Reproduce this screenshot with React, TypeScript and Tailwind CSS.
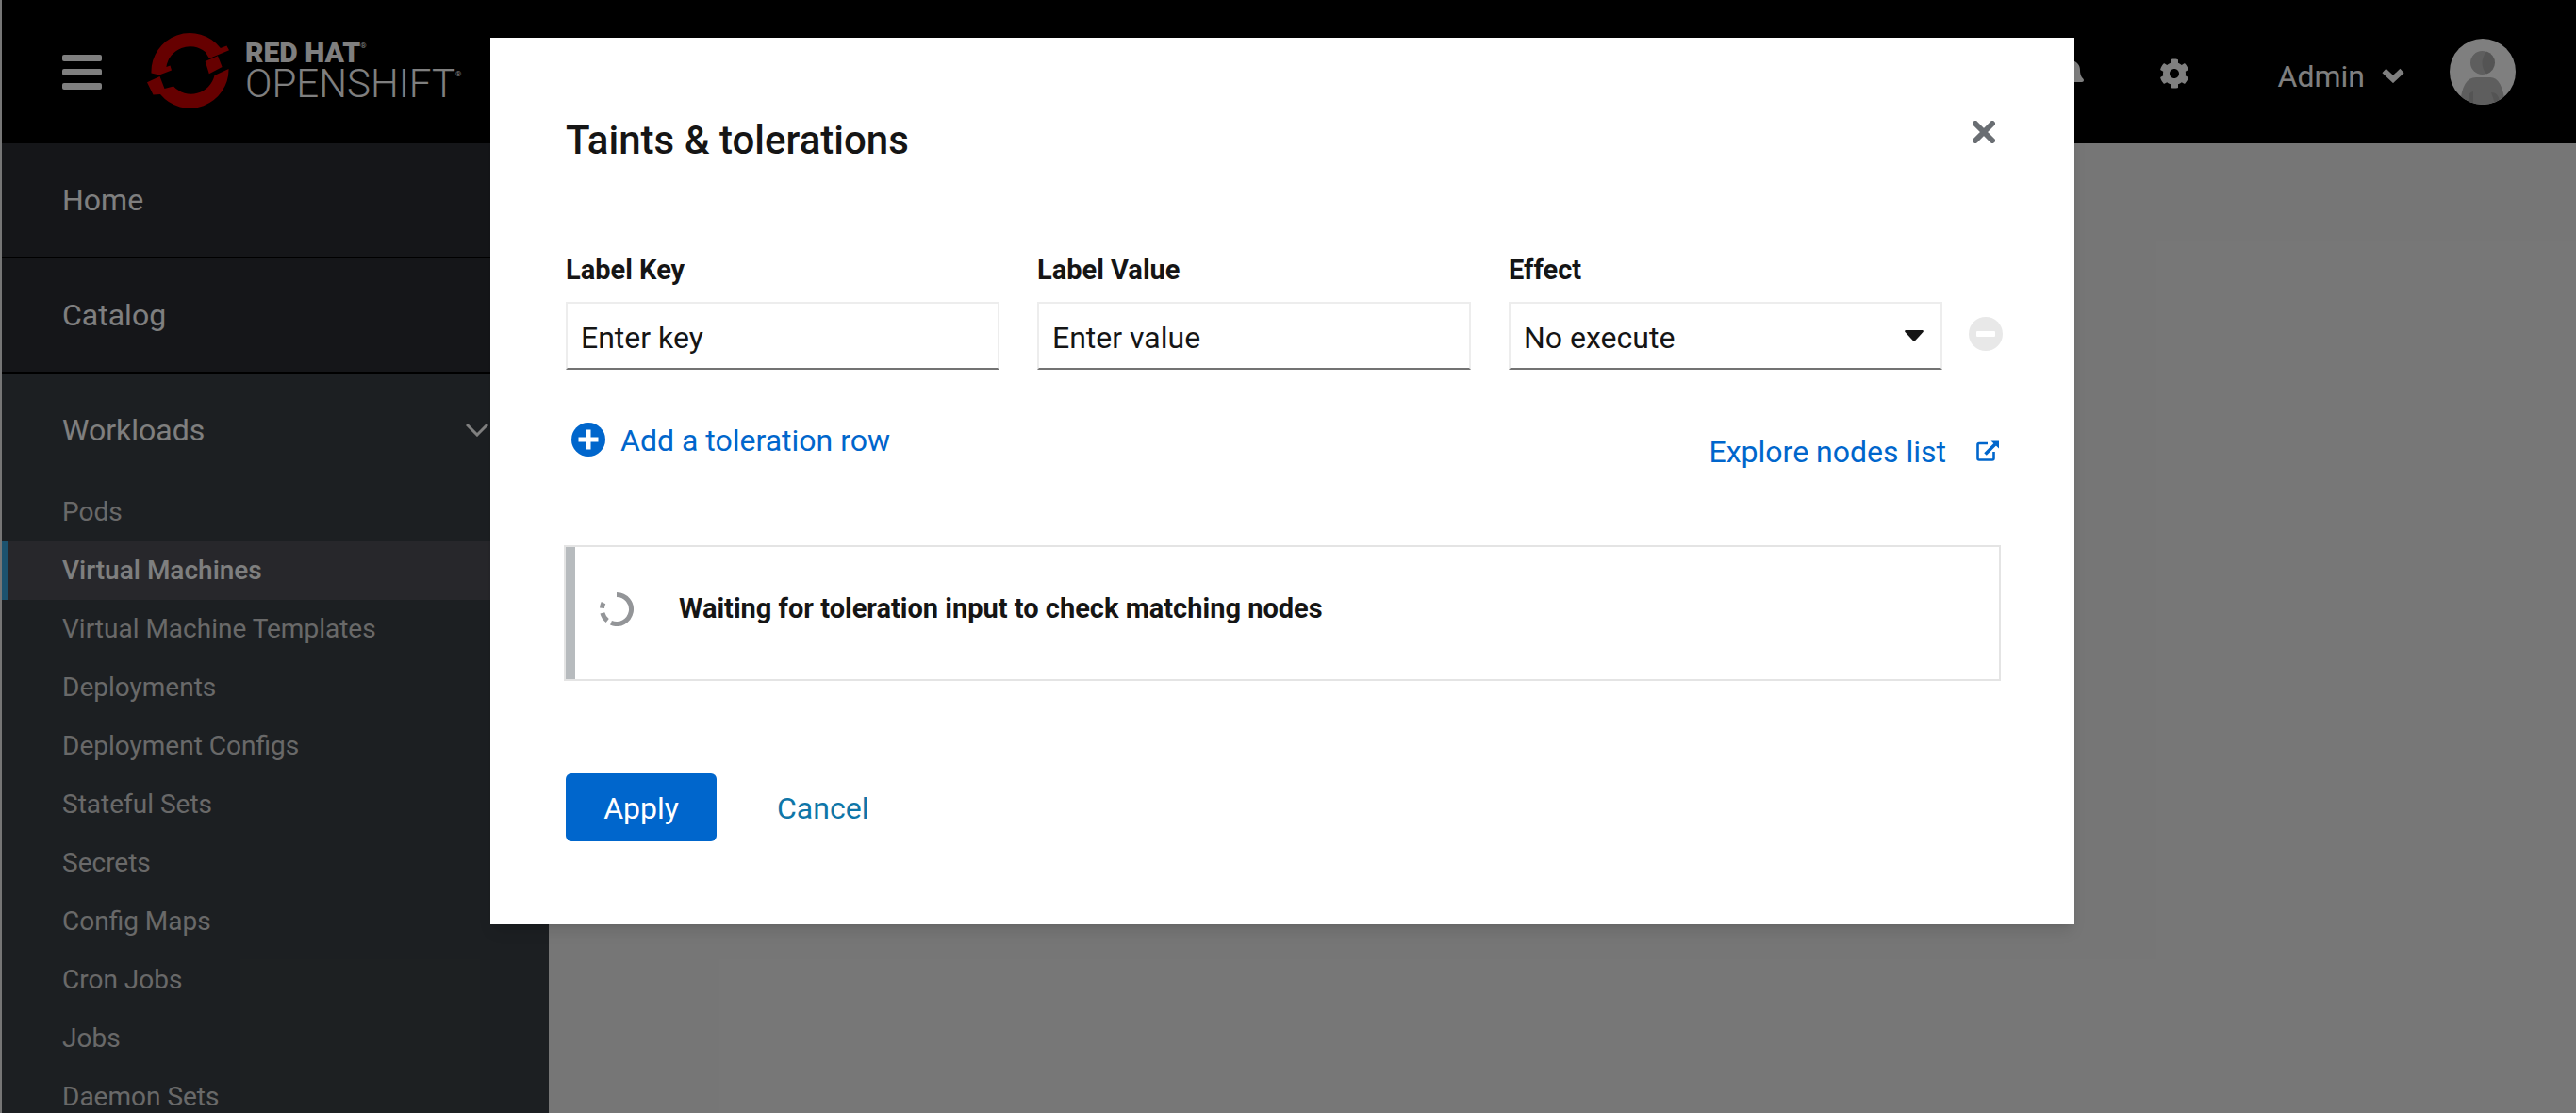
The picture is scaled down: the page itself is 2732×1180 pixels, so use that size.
import React from "react";
import { FaBell, FaCog } from "react-icons/fa";

const workloadItems = [
  "Pods",
  "Virtual Machines",
  "Virtual Machine Templates",
  "Deployments",
  "Deployment Configs",
  "Stateful Sets",
  "Secrets",
  "Config Maps",
  "Cron Jobs",
  "Jobs",
  "Daemon Sets",
];

function OpenShiftMark() {
  return (
    <svg viewBox="0 0 88 82" className="h-[82px] w-[88px]" fill="#cc0000" aria-hidden="true">
      <path d="M4.5 44.5 A41 41 0 0 1 77.9 18 L84.4 15.5 L87 20.3 L66 29 L61.7 22 A25.5 25.5 0 0 0 20.4 38 L24.5 36.5 L26 41.5 L13 46.500 Z" />
      <path d="M0 54.3 L13.5 48 L18.5 61 L28 58.5 A25.5 25.5 0 0 0 71.5 47 L86.5 40 A41 41 0 0 1 14 67 L6.5 67.5 Z" />
      <path d="M61.7 32 L75 26.3 L79.6 38 L65.8 45.3 Z" />
    </svg>
  );
}

function Avatar() {
  return (
    <svg viewBox="0 0 70 70" className="size-[70px]" role="img" aria-label="Admin avatar">
      <defs>
        <clipPath id="avatar-clip">
          <circle cx="35" cy="35" r="35" />
        </clipPath>
      </defs>
      <g clipPath="url(#avatar-clip)">
        <rect width="70" height="70" fill="#ffffff" />
        <circle cx="34.5" cy="25.5" r="12.5" fill="#bcbcbc" />
        <path d="M39 13.500 A12.500 12.500 0 0 1 39 37.500 Q30 26 39 13.500Z" fill="#a8a8a8" />
        <path d="M11 70 Q13 41 28 41 H43 Q56 41 59 70Z" fill="#bcbcbc" />
        <path d="M20 70 V62 Q20 57 25 56 V70Z M44 57 Q53 57 53 70 H48 Q46 62 44 57Z" fill="#a8a8a8" />
      </g>
    </svg>
  );
}

function Masthead() {
  return (
    <header className="flex h-[152px] shrink-0 items-center bg-black px-16 text-white">
      <button type="button" aria-label="Toggle navigation" className="flex w-[42px] flex-col gap-2">
        <span className="h-[7px] w-full rounded-xs bg-white" />
        <span className="h-[7px] w-full rounded-xs bg-white" />
        <span className="h-[7px] w-full rounded-xs bg-white" />
      </button>
      <a href="#" className="ml-12 flex items-center gap-4 pb-1">
        <OpenShiftMark />
        <span className="flex flex-col">
          <span className="flex items-start text-[30px] leading-[30px] font-black">
            RED HAT<span className="pt-1 text-[8px] leading-none font-normal">®</span>
          </span>
          <span className="flex items-start text-[42px] leading-9 font-light">
            OPENSHIFT<span className="pt-1 text-[8px] leading-none font-normal">®</span>
          </span>
        </span>
      </a>
      <div className="ml-auto flex items-center">
        <button type="button" aria-label="Notifications" className="mt-0.5 mr-[78px]">
          <FaBell className="size-8" />
        </button>
        <button type="button" aria-label="Settings" className="mt-1">
          <FaCog className="size-8" />
        </button>
        <button type="button" className="mt-2 ml-[94px] flex items-center gap-[18px] text-[32px] leading-10">
          <span className="pt-0.5">Admin</span>
          <svg viewBox="0 0 24 16" className="h-4 w-6" fill="none" stroke="currentColor" strokeWidth="6" aria-hidden="true">
            <path d="M2.500 3 L12 12 L21.500 3" />
          </svg>
        </button>
        <span className="ml-12">
          <Avatar />
        </span>
      </div>
    </header>
  );
}

function Sidebar() {
  return (
    <nav className="w-[580px] shrink-0 overflow-hidden bg-[#393f44] text-white">
      <a href="#" className="flex h-[122px] items-center border-b-2 border-black bg-[#2a2c33] px-16 text-[32px]">
        Home
      </a>
      <a href="#" className="flex h-[122px] items-center border-b-2 border-black bg-[#2a2c33] px-16 text-[32px]">
        Catalog
      </a>
      <button type="button" aria-expanded="true" className="flex h-[116px] w-full items-center justify-between px-16 pt-1 text-[32px]">
        Workloads
        <svg viewBox="0 0 24 14" className="h-3.5 w-6" fill="none" stroke="currentColor" strokeWidth="3" aria-hidden="true">
          <path d="M1 1 L12 12 L23 1" />
        </svg>
      </button>
      <ul className="text-[28px]">
        {workloadItems.map((item) => {
          const active = item === "Virtual Machines";
          return (
            <li key={item}>
              <a
                href="#"
                aria-current={active ? "page" : undefined}
                className={
                  active
                    ? "flex h-[62px] items-center border-l-6 border-[#39a5dc] bg-[#4e4f56] pl-[58px] font-medium text-white"
                    : "flex h-[62px] items-center pl-16 text-[#d2d2d2]"
                }
              >
                {item}
              </a>
            </li>
          );
        })}
      </ul>
    </nav>
  );
}

const fieldClass =
  "block h-[72px] w-full appearance-none border-2 border-[#ededed] border-b-[#737373] bg-white px-3.5 pt-1 text-[32px] text-[#151515] outline-none placeholder:text-[#151515] placeholder:opacity-100";
const labelClass = "mb-3.5 block text-[29px] leading-10 font-bold";

function TolerationsDialog() {
  return (
    <div
      role="dialog"
      aria-modal="true"
      aria-labelledby="dialog-title"
      className="w-full max-w-[1680px] bg-white px-20 pt-20 pb-[88px] text-[#151515] shadow-lg"
    >
      <div className="flex items-start justify-between">
        <h1 id="dialog-title" className="pt-0.5 text-[42px] leading-[54px] font-medium">
          Taints &amp; tolerations
        </h1>
        <button type="button" aria-label="Close" className="mt-2 mr-1">
          <svg viewBox="0 0 24 24" className="size-6" stroke="#6a6e73" strokeWidth="6" strokeLinecap="round" aria-hidden="true">
            <path d="M3 3 L21 21 M21 3 L3 21" />
          </svg>
        </button>
      </div>

      <form>
        <div className="mt-[90px] -mr-1 flex items-end gap-7">
          <div className="grid flex-1 grid-cols-3 gap-10">
            <div>
              <label htmlFor="label-key" className={labelClass}>
                Label Key
              </label>
              <input id="label-key" type="text" placeholder="Enter key" className={fieldClass} />
            </div>
            <div>
              <label htmlFor="label-value" className={labelClass}>
                Label Value
              </label>
              <input id="label-value" type="text" placeholder="Enter value" className={fieldClass} />
            </div>
            <div>
              <label htmlFor="effect" className={labelClass}>
                Effect
              </label>
              <div className="relative">
                <select id="effect" defaultValue="No execute" className={fieldClass}>
                  <option>No execute</option>
                  <option>No schedule</option>
                  <option>Prefer no schedule</option>
                </select>
                <svg viewBox="0 0 20 12" className="pointer-events-none absolute top-[30px] right-5 h-3 w-5" fill="#151515" aria-hidden="true">
                  <path d="M1 0 H19 Q20.500 0.500 19.500 2 L11.500 10.700 Q10 12 8.500 10.700 L0.500 2 Q-0.500 0.500 1 0Z" />
                </svg>
              </div>
            </div>
          </div>
          <button type="button" aria-label="Remove toleration" disabled className="mb-5">
            <svg viewBox="0 0 36 36" className="size-9" aria-hidden="true">
              <circle cx="18" cy="18" r="18" fill="#e8e8e8" />
              <rect x="8" y="15" width="20" height="6" rx="1" fill="#ffffff" />
            </svg>
          </button>
        </div>

        <div className="mt-12 flex items-start justify-between text-[32px] text-[#0066cc]">
          <button type="button" className="flex h-[52px] items-center gap-4 pl-1.5">
            <svg viewBox="0 0 36 36" className="size-9" aria-hidden="true">
              <circle cx="18" cy="18" r="18" fill="#0066cc" />
              <path d="M15.500 7.500 h5 v8 h8 v5 h-8 v8 h-5 v-8 h-8 v-5 h8z" fill="#ffffff" />
            </svg>
            <span className="pt-0.5">Add a toleration row</span>
          </button>
          <a href="#" className="mt-3 flex h-[52px] items-center gap-8">
            <span className="pt-0.5">Explore nodes list</span>
            <svg viewBox="0 0 24 22" className="h-[22px] w-6" fill="none" stroke="currentColor" strokeWidth="2.600" aria-hidden="true">
              <path d="M12 3 H3 Q1.500 3 1.500 4.500 V19 Q1.500 20.500 3 20.500 H17 Q18.500 20.500 18.500 19 V12" />
              <path d="M9.500 14.500 L20 4" strokeWidth="3.600" />
              <path d="M15.500 0.500 H24 V8.500 Z" fill="currentColor" stroke="none" />
            </svg>
          </a>
        </div>

        <div role="status" className="-mx-0.5 mt-[74px] flex h-36 border-2 border-[#e4e4e4]">
          <span className="w-2.5 bg-[#b7bbbe]" />
          <div className="ml-[26px] flex items-center gap-12 pb-2">
            <svg viewBox="0 0 36 36" className="size-9" fill="none" stroke="#939598" strokeWidth="5" aria-hidden="true">
              <path d="M18 2.500 A15.500 15.500 0 1 1 12 32.300" />
              <path d="M8.200 30 A15.500 15.500 0 0 1 2.900 21.800" />
              <path d="M2.500 16.800 A15.500 15.500 0 0 1 4 11.200" />
            </svg>
            <p className="text-[29px] font-bold">Waiting for toleration input to check matching nodes</p>
          </div>
        </div>

        <div className="mt-[98px] flex gap-16 text-[32px]">
          <button type="submit" className="h-[72px] w-40 rounded-md bg-[#0066cc] pt-0.5 text-white">
            Apply
          </button>
          <button type="button" className="h-[72px] pt-0.5 text-[#0e76a8]">
            Cancel
          </button>
        </div>
      </form>
    </div>
  );
}

export default function App() {
  return (
    <div className="relative h-screen overflow-hidden bg-[#ededed] font-['Roboto',sans-serif]">
      <div className="flex h-full flex-col border-l-2 border-[#ededed]">
        <Masthead />
        <div className="flex min-h-0 flex-1">
          <Sidebar />
          <main className="flex-1" />
        </div>
      </div>
      <div className="absolute inset-0 flex items-start justify-center bg-black/50 pt-10 pr-3">
        <TolerationsDialog />
      </div>
    </div>
  );
}
